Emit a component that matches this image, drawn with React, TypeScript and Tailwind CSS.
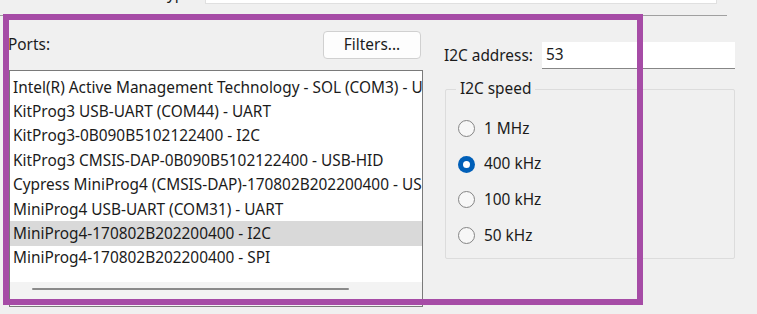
const ports = [
  "Intel(R) Active Management Technology - SOL (COM3) - UART",
  "KitProg3 USB-UART (COM44) - UART",
  "KitProg3-0B090B5102122400 - I2C",
  "KitProg3 CMSIS-DAP-0B090B5102122400 - USB-HID",
  "Cypress MiniProg4 (CMSIS-DAP)-170802B202200400 - USB-HID",
  "MiniProg4 USB-UART (COM31) - UART",
  "MiniProg4-170802B202200400 - I2C",
  "MiniProg4-170802B202200400 - SPI",
];

const speeds = ["1 MHz", "400 kHz", "100 kHz", "50 kHz"];

function Radio({ checked }: { checked: boolean }) {
  return checked ? (
    <span className="w-[17px] h-[17px] rounded-full bg-[#005fb8] flex items-center justify-center shrink-0">
      <span className="w-[7px] h-[7px] rounded-full bg-white" />
    </span>
  ) : (
    <span className="w-[17px] h-[17px] rounded-full border border-[#858585] bg-[#f7f7f7] shrink-0" />
  );
}

export default function App() {
  const selected = 6;
  const speed = 1;

  return (
    <div
      className="relative w-[757px] h-[314px] bg-[#f0f0f0] overflow-hidden text-[#1b1b1b] text-[15.4px]"
      style={{ fontFamily: '"Noto Sans", "Open Sans", sans-serif' }}
    >
      {/* row above, cut off by the window edge */}
      <div className="flex h-[4px] items-end overflow-hidden">
        <div className="w-[205px] h-[4px] overflow-hidden flex justify-end pr-[8px]">
          <span className="leading-[20px] -mt-[16px] whitespace-nowrap">Interface type:</span>
        </div>
        <div className="w-[512px] h-[4px] bg-white border-b border-x border-[#e0e0e0]" />
      </div>
      <div className="mt-[11px] w-[727px] h-px bg-[#a0a0a0]" />

      <div className="flex pl-[9px] pt-[15px]">
        {/* ports column */}
        <div className="w-[414px] flex flex-col">
          <div className="flex items-center justify-between h-[28px]">
            <span className="-ml-[1px] leading-none">Ports:</span>
            <button className="w-[98px] h-[28px] mr-[2px] rounded-[4px] border border-[#d0d0d0] bg-[#fdfdfd] leading-none">
              Filters...
            </button>
          </div>
          <div className="mt-[11px] h-[237px] border border-[#7a7a7a] bg-white flex flex-col">
            <div className="pt-[4px] flex flex-col">
              {ports.map((p, i) => (
                <div
                  key={p}
                  className={`h-[24.4px] flex items-center pl-[3px] whitespace-nowrap overflow-hidden ${
                    i === selected ? "bg-[#d9d9d9]" : ""
                  }`}
                >
                  {p}
                </div>
              ))}
            </div>
            <div className="mt-auto h-[24px] bg-[#f3f3f3] pt-[6px] pl-[22px]">
              <div className="w-[317px] h-[2px] bg-[#8a8a8a] rounded-full" />
            </div>
          </div>
        </div>

        {/* settings column */}
        <div className="ml-[21px] w-[291px] flex flex-col">
          <div className="flex items-center mt-[11px] h-[27px]">
            <span className="w-[98px] leading-none">I2C address:</span>
            <div className="flex-1 h-[27px] bg-white border-b border-[#868686] flex items-center pl-[4px] leading-none">
              53
            </div>
          </div>
          <div className="relative mt-[20px] ml-[1px] h-[170px] border border-[#dcdcdc] rounded-[2px]">
            <span className="absolute -top-[11px] left-[10px] px-[4px] bg-[#f0f0f0] leading-[20px]">
              I2C speed
            </span>
            <div className="flex flex-col pt-[30px] pl-[12px] gap-[18.6px]">
              {speeds.map((s, i) => (
                <div key={s} className="flex items-center gap-[9px] h-[17px]">
                  <Radio checked={i === speed} />
                  <span className="leading-none">{s}</span>
                </div>
              ))}
            </div>
          </div>
        </div>
      </div>

      {/* highlight annotation */}
      <div className="absolute left-[3px] top-[14px] w-[640px] h-[291px] border-[6px] border-[#a64ca6] pointer-events-none" />
    </div>
  );
}
